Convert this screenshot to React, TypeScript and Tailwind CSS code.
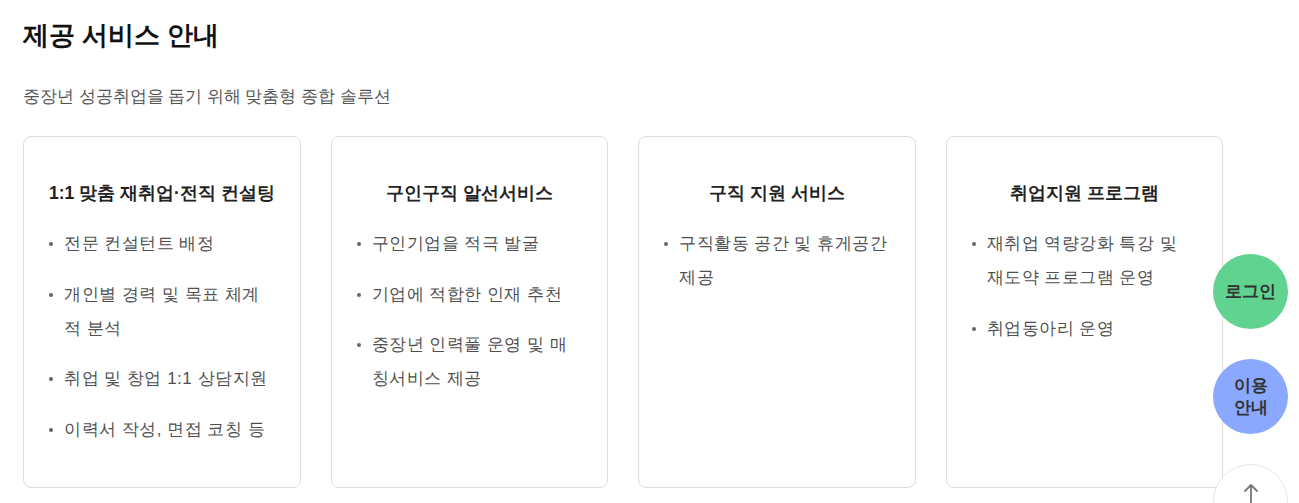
import React from "react";

const cards = [
  {
    title: "1:1 맞춤 재취업·전직 컨설팅",
    items: ["전문 컨설턴트 배정", "개인별 경력 및 목표 체계적 분석", "취업 및 창업 1:1 상담지원", "이력서 작성, 면접 코칭 등"],
  },
  {
    title: "구인구직 알선서비스",
    items: ["구인기업을 적극 발굴", "기업에 적합한 인재 추천", "중장년 인력풀 운영 및 매칭서비스 제공"],
  },
  {
    title: "구직 지원 서비스",
    items: ["구직활동 공간 및 휴게공간 제공"],
  },
  {
    title: "취업지원 프로그램",
    items: ["재취업 역량강화 특강 및 재도약 프로그램 운영", "취업동아리 운영"],
  },
];

export default function App() {
  return (
    <div className="relative h-[503px] w-[1299px] overflow-hidden bg-white font-[Malgun_Gothic,sans-serif]">
      <div className="pl-[23px] pt-[14px]">
        <h2 className="text-[26px] font-bold leading-[42px] text-[#111]">제공 서비스 안내</h2>
        <p className="mt-[27px] text-[16.5px] leading-[26px] text-[#555]">중장년 성공취업을 돕기 위해 맞춤형 종합 솔루션</p>
        <div className="mt-[27px] grid w-[1200px] grid-cols-4 gap-[30px]">
          {cards.map((c) => (
            <div key={c.title} className="h-[352px] rounded-[8px] border border-[#dddddd] pl-[25px] pr-[25px] pt-[39px]">
              <h3 className="whitespace-nowrap text-center text-[17.5px] font-bold leading-[34px] text-[#222]">{c.title}</h3>
              <ul className="mt-[17px] flex flex-col gap-[16.5px]">
                {c.items.map((it) => (
                  <li key={it} className="flex text-[17px] leading-[34px] tracking-[0.5px] text-[#4f4f4f]">
                    <span className="mr-[11px] mt-[15px] h-[4px] w-[4px] shrink-0 rounded-full bg-[#666]" />
                    <span>{it}</span>
                  </li>
                ))}
              </ul>
            </div>
          ))}
        </div>
      </div>
      <div className="absolute left-[1213px] top-[254px] flex h-[75px] w-[75px] items-center justify-center rounded-full bg-[#5fd38f] text-[17px] font-bold text-[#333]">
        로그인
      </div>
      <div className="absolute left-[1213px] top-[359px] flex h-[75px] w-[75px] flex-col items-center justify-center rounded-full bg-[#8aa8fe] text-[17px] font-bold leading-[22px] text-[#333]">
        <span>이용</span>
        <span>안내</span>
      </div>
      <div className="absolute left-[1213px] top-[464px] flex h-[75px] w-[75px] items-start justify-center rounded-full border border-[#e5e5e5] bg-white pt-[18px]">
        <svg width="16" height="22" viewBox="0 0 16 22" fill="none" stroke="#777" strokeWidth="1.8" strokeLinecap="round" strokeLinejoin="round">
          <path d="M8 21V2M2 8l6-6 6 6" />
        </svg>
      </div>
    </div>
  );
}
